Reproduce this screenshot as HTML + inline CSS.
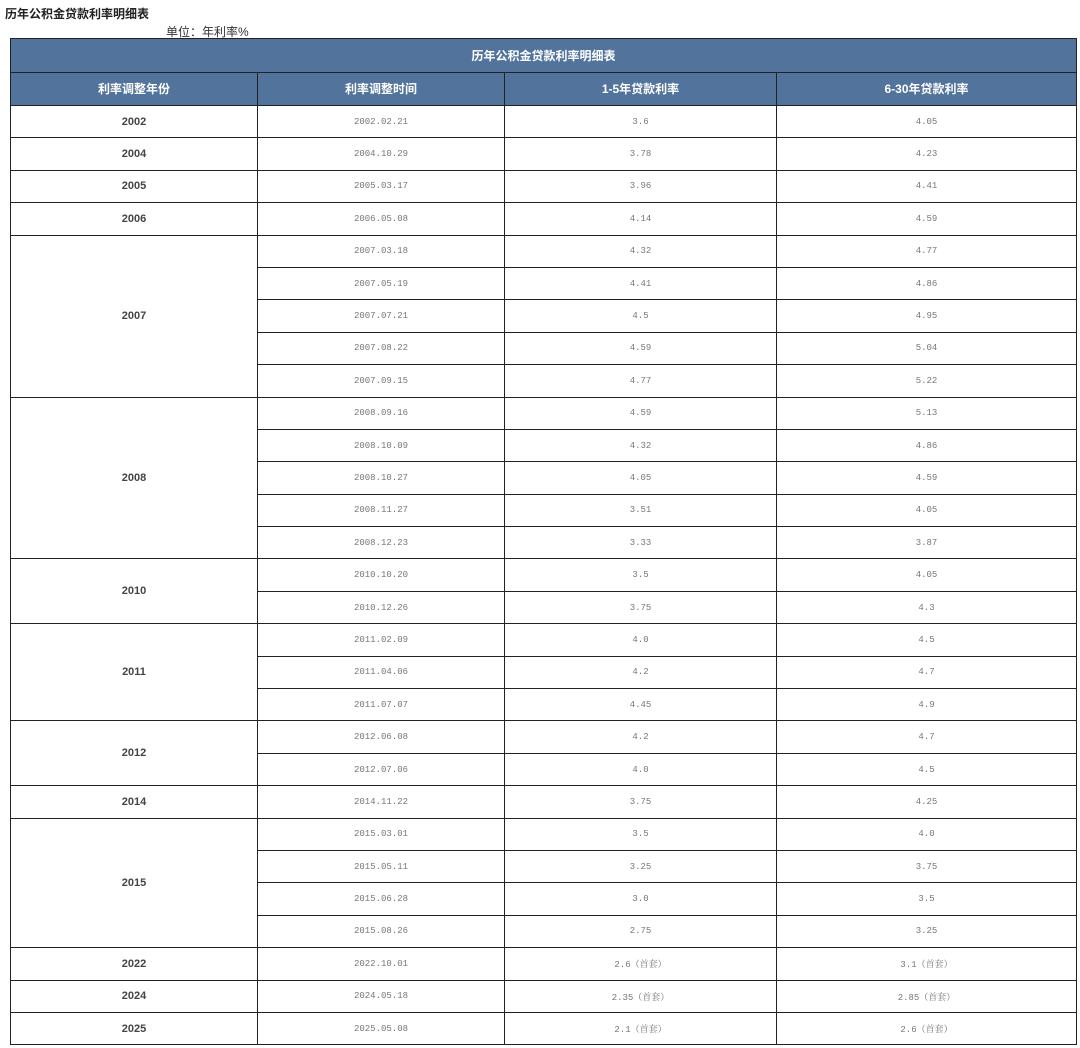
<!DOCTYPE html>
<html><head><meta charset="utf-8"><style>
body{margin:0;background:#fff;font-family:"Liberation Sans","Noto Sans CJK SC",sans-serif;}
.t1{position:absolute;left:5px;top:5px;font-size:12px;font-weight:bold;color:#222;}
.t2{position:absolute;left:166px;top:23px;font-size:12px;color:#333;}
table{position:absolute;left:10px;top:38px;width:1066px;border-collapse:collapse;table-layout:fixed;}
td{border:1px solid #222;text-align:center;padding:0;height:31.4px;font-size:9px;color:#777;font-family:"Liberation Mono","Noto Serif CJK SC",monospace;}
td.y{font-family:"Liberation Sans","Noto Sans CJK SC",sans-serif;font-weight:bold;font-size:11px;color:#444;}
tr.h td{background:#52739c;color:#fff;font-weight:bold;font-size:12px;font-family:"Liberation Sans","Noto Sans CJK SC",sans-serif;height:32.5px;}
</style></head><body>
<div class="t1">历年公积金贷款利率明细表</div>
<div class="t2">单位：年利率%</div>
<table>
<colgroup><col style="width:247px"><col style="width:247px"><col style="width:272px"><col style="width:300px"></colgroup>
<tr class="h"><td colspan="4">历年公积金贷款利率明细表</td></tr>
<tr class="h"><td>利率调整年份</td><td>利率调整时间</td><td>1-5年贷款利率</td><td>6-30年贷款利率</td></tr>
<tr><td class="y">2002</td><td>2002.02.21</td><td>3.6</td><td>4.05</td></tr>
<tr><td class="y">2004</td><td>2004.10.29</td><td>3.78</td><td>4.23</td></tr>
<tr><td class="y">2005</td><td>2005.03.17</td><td>3.96</td><td>4.41</td></tr>
<tr><td class="y">2006</td><td>2006.05.08</td><td>4.14</td><td>4.59</td></tr>
<tr><td class="y" rowspan="5">2007</td><td>2007.03.18</td><td>4.32</td><td>4.77</td></tr>
<tr><td>2007.05.19</td><td>4.41</td><td>4.86</td></tr>
<tr><td>2007.07.21</td><td>4.5</td><td>4.95</td></tr>
<tr><td>2007.08.22</td><td>4.59</td><td>5.04</td></tr>
<tr><td>2007.09.15</td><td>4.77</td><td>5.22</td></tr>
<tr><td class="y" rowspan="5">2008</td><td>2008.09.16</td><td>4.59</td><td>5.13</td></tr>
<tr><td>2008.10.09</td><td>4.32</td><td>4.86</td></tr>
<tr><td>2008.10.27</td><td>4.05</td><td>4.59</td></tr>
<tr><td>2008.11.27</td><td>3.51</td><td>4.05</td></tr>
<tr><td>2008.12.23</td><td>3.33</td><td>3.87</td></tr>
<tr><td class="y" rowspan="2">2010</td><td>2010.10.20</td><td>3.5</td><td>4.05</td></tr>
<tr><td>2010.12.26</td><td>3.75</td><td>4.3</td></tr>
<tr><td class="y" rowspan="3">2011</td><td>2011.02.09</td><td>4.0</td><td>4.5</td></tr>
<tr><td>2011.04.06</td><td>4.2</td><td>4.7</td></tr>
<tr><td>2011.07.07</td><td>4.45</td><td>4.9</td></tr>
<tr><td class="y" rowspan="2">2012</td><td>2012.06.08</td><td>4.2</td><td>4.7</td></tr>
<tr><td>2012.07.06</td><td>4.0</td><td>4.5</td></tr>
<tr><td class="y">2014</td><td>2014.11.22</td><td>3.75</td><td>4.25</td></tr>
<tr><td class="y" rowspan="4">2015</td><td>2015.03.01</td><td>3.5</td><td>4.0</td></tr>
<tr><td>2015.05.11</td><td>3.25</td><td>3.75</td></tr>
<tr><td>2015.06.28</td><td>3.0</td><td>3.5</td></tr>
<tr><td>2015.08.26</td><td>2.75</td><td>3.25</td></tr>
<tr><td class="y">2022</td><td>2022.10.01</td><td>2.6（首套）</td><td>3.1（首套）</td></tr>
<tr><td class="y">2024</td><td>2024.05.18</td><td>2.35（首套）</td><td>2.85（首套）</td></tr>
<tr><td class="y">2025</td><td>2025.05.08</td><td>2.1（首套）</td><td>2.6（首套）</td></tr>
</table>
</body></html>
